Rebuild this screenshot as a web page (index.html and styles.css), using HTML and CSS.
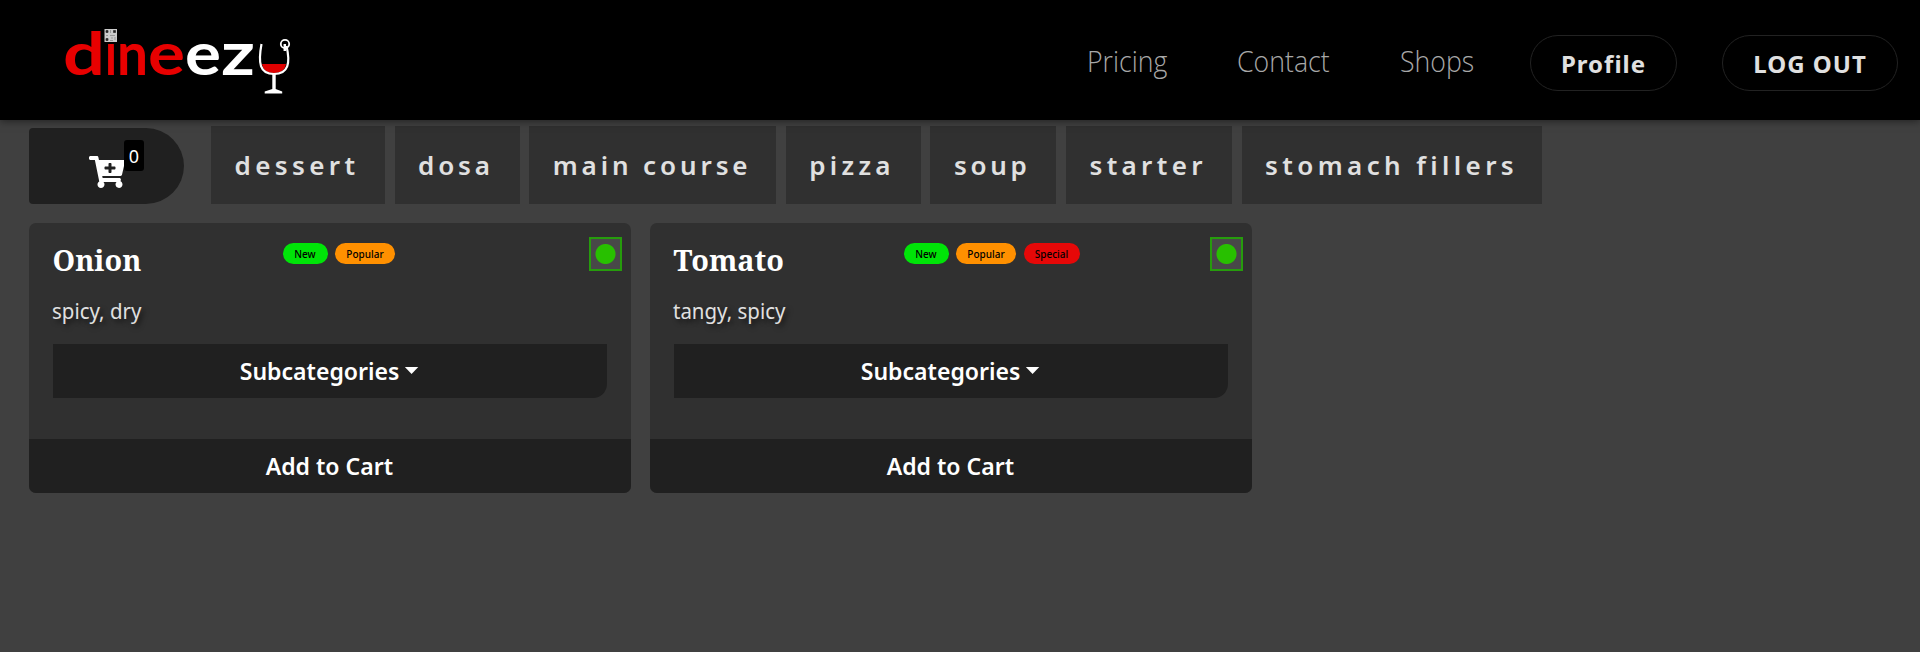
FILE: index.html
```html
<!DOCTYPE html>
<html lang="en">
<head>
<meta charset="utf-8">
<title>dineezy</title>
<link rel="stylesheet" href="styles.css">
</head>
<body>
<header class="header">
  <svg class="logo" viewBox="-10 -20 250 120" role="img" aria-label="dineezy">
    <g class="logo-text logo-red">
      <text x="-1" y="55" textLength="42" lengthAdjust="spacingAndGlyphs">d</text>
      <text x="41" y="55" textLength="12" lengthAdjust="spacingAndGlyphs">ı</text>
      <text x="53" y="55" textLength="31" lengthAdjust="spacingAndGlyphs">n</text>
      <text x="84" y="55" textLength="37" lengthAdjust="spacingAndGlyphs">e</text>
    </g>
    <g class="logo-text logo-white">
      <text x="121" y="55" textLength="36" lengthAdjust="spacingAndGlyphs">e</text>
      <text x="157" y="55" textLength="34" lengthAdjust="spacingAndGlyphs">z</text>
    </g>
    <rect x="40.500" y="9" width="12.500" height="13" fill="#ccc"/>
    <path d="M42 10.500h2v2h-2zM49.500 10.500h2v2h-2zM42 18.500h2v2h-2z" fill="#222" stroke="#333" stroke-width=".8"/>
    <path d="M46.500 10v3M46 15.500h5M42 15.500h2M47 18h2M51 17v3M46 20.500h3" fill="none" stroke="#999" stroke-width="1"/>
    <path d="M198 44h24c-1 6-5 9-12 9s-11-3-12-9z" fill="#e00000"/>
    <path d="M197.500 24c-3.500 19-2 30 12.500 30s16.500-11 12.500-28" fill="none" stroke="#fff" stroke-width="2.200"/>
    <path d="M220.800 31v-7" stroke="#fff" stroke-width="2.500"/>
    <circle cx="221" cy="24" r="4.200" fill="none" stroke="#fff" stroke-width="1.800"/>
    <path d="M208.300 54h3.400v15l6.500 2.500v2h-17.500v-2l7.600-2.500z" fill="#fff"/>
  </svg>
  <nav class="nav">
    <a class="nav-link pricing"><span>Pricing</span></a>
    <a class="nav-link contact"><span>Contact</span></a>
    <a class="nav-link shops"><span>Shops</span></a>
    <a class="pill profile">Profile</a>
    <a class="pill logout">LOG OUT</a>
  </nav>
</header>
<main>
  <div class="toolbar">
    <button class="cart" aria-label="Cart">
      <svg class="cart-icon" viewBox="0 0 576 512"><path fill="#fff" d="M504.717 320H211.572l6.545 32h268.418c15.401 0 26.816 14.301 23.403 29.319l-5.517 24.276C523.112 414.668 536 433.828 536 456c0 31.202-25.519 56.444-56.824 55.994-29.823-.429-54.35-24.631-55.155-54.447-.44-16.287 6.085-31.049 16.803-41.548H231.176C241.553 426.165 248 440.326 248 456c0 31.813-26.528 57.431-58.67 55.938-28.54-1.325-51.751-24.385-53.251-52.917-1.158-22.034 10.436-41.455 28.051-51.586L93.883 64H24C10.745 64 0 53.255 0 40V24C0 10.745 10.745 0 24 0h102.529c11.401 0 21.228 8.021 23.513 19.19L159.208 64H551.99c15.401 0 26.816 14.301 23.403 29.319l-47.273 208C525.637 312.246 515.923 320 504.717 320zM408 168h-48v-40c0-8.837-7.163-16-16-16h-16c-8.837 0-16 7.163-16 16v40h-48c-8.837 0-16 7.163-16 16v16c0 8.837 7.163 16 16 16h48v40c0 8.837 7.163 16 16 16h16c8.837 0 16-7.163 16-16v-40h48c8.837 0 16-7.163 16-16v-16c0-8.837-7.163-16-16-16z"/></svg>
      <span class="cart-count">0</span>
    </button>
    <div class="tabs">
      <a class="tab dessert">dessert</a>
      <a class="tab dosa">dosa</a>
      <a class="tab main-course">main course</a>
      <a class="tab pizza">pizza</a>
      <a class="tab soup">soup</a>
      <a class="tab starter">starter</a>
      <a class="tab stomach">stomach fillers</a>
    </div>
  </div>
  <section class="cards">
    <article class="card">
      <div class="card-head">
        <h2 class="title">Onion</h2>
        <div class="badges"><span class="badge new">New</span><span class="badge popular">Popular</span></div>
        <span class="veg"></span>
      </div>
      <p class="desc"><span>spicy, dry</span></p>
      <button class="sub"><span class="label">Subcategories<i class="caret"></i></span></button>
      <button class="add"><span class="label">Add to Cart</span></button>
    </article>
    <article class="card">
      <div class="card-head">
        <h2 class="title">Tomato</h2>
        <div class="badges"><span class="badge new">New</span><span class="badge popular">Popular</span><span class="badge special">Special</span></div>
        <span class="veg"></span>
      </div>
      <p class="desc"><span>tangy, spicy</span></p>
      <button class="sub"><span class="label">Subcategories<i class="caret"></i></span></button>
      <button class="add"><span class="label">Add to Cart</span></button>
    </article>
  </section>
</main>
</body>
</html>
```
FILE: styles.css
```css
* { box-sizing: border-box; }
body {
  margin: 0;
  height: 652px;
  overflow: hidden;
  background: #404040;
  font-family: "Noto Sans", sans-serif;
}
button { border: 0; padding: 0; color: inherit; font: inherit; }
.header {
  position: relative;
  display: flex;
  justify-content: space-between;
  height: 120px;
  padding: 0 22px 0 54px;
  background: #000;
  box-shadow: 0 1px 8px rgba(0, 0, 0, .5);
}
.logo { width: 250px; height: 120px; }
.logo-text { font: 700 60px Lato, sans-serif; }
.logo-red { fill: #e80000; }
.logo-white { fill: #fff; }
.nav { display: flex; align-items: flex-start; padding-top: 20px; }
.nav-link {
  font: 300 30px/40px "Open Sans", sans-serif;
  color: #a8a8a8;
  margin-top: 21px;
  padding-left: 1px;
  white-space: nowrap;
}
.nav-link span { display: inline-block; transform: scaleX(.89); transform-origin: 0 50%; }
.pricing { width: 150px; }
.contact { width: 163px; }
.shops { width: 131px; }
.pill {
  height: 56px;
  margin-top: 15px;
  border: 1px solid #222;
  border-radius: 28px;
  font: 700 24px/56px "Noto Sans", sans-serif;
  letter-spacing: 1px;
  color: #e0e0e0;
  text-align: center;
}
.profile { width: 147px; margin-right: 45px; }
.logout { width: 176px; }
.toolbar { display: flex; align-items: flex-end; height: 84px; padding-left: 29px; }
.cart {
  position: relative;
  width: 155px;
  height: 76px;
  margin-right: 27px;
  border-radius: 4px 38px 38px 4px;
  background: #202020;
}
.cart-icon { position: absolute; left: 59.500px; top: 27.500px; width: 36px; height: 32px; }
.cart-count {
  position: absolute;
  left: 95px;
  top: 12px;
  width: 20px;
  height: 31px;
  border-radius: 3px;
  background: #000;
  color: #fff;
  font: 18px/33px "Noto Sans", sans-serif;
  text-align: center;
}
.tabs { display: flex; gap: 9.600px; }
.tab {
  height: 78px;
  padding-left: 23.500px;
  background: #303030;
  color: #e0e0e0;
  font: 600 26px/78px "Noto Sans", sans-serif;
  letter-spacing: 4px;
  white-space: nowrap;
}
.dessert { width: 174px; letter-spacing: 4.400px; }
.dosa { width: 125px; letter-spacing: 3.800px; }
.main-course { width: 247px; letter-spacing: 3.900px; }
.pizza { width: 135px; letter-spacing: 4.300px; }
.soup { width: 126px; letter-spacing: 3.700px; }
.starter { width: 166px; letter-spacing: 4.350px; }
.stomach { width: 300px; letter-spacing: 4.400px; }
.cards { display: flex; gap: 19px; padding: 19px 29px; }
.card {
  display: flex;
  flex-direction: column;
  width: 602px;
  height: 270px;
  border-radius: 7px;
  background: #303030;
  overflow: hidden;
}
.card-head { display: flex; height: 68px; padding: 14px 9px 0 23.500px; }
.title {
  width: 230px;
  margin: 0;
  color: #fff;
  font: 700 28.800px/46px "Noto Serif", "DejaVu Serif Condensed", serif;
}
.badges { display: flex; gap: 7.500px; flex: 1; padding-top: 6px; }
.badge {
  height: 21px;
  border-radius: 11px;
  color: #000;
  font: 500 10px/23px "Noto Sans", sans-serif;
  text-align: center;
}
.new { width: 45px; background: #00e408; }
.popular { width: 60px; background: #ff9000; }
.special { width: 56px; background: #e60808; }
.veg {
  width: 33px;
  height: 34px;
  border: 2px solid #269c0c;
  background: radial-gradient(circle, #28c000 9.500px, #484848 10.500px);
}
.desc {
  margin: 0 23px;
  height: 53px;
  color: #e0e0e0;
  font: 22px/39px "Noto Sans", sans-serif;
  text-shadow: 3px 3px 5px rgba(0, 0, 0, .6);
}
.desc span { display: inline-block; transform: scaleX(.93); transform-origin: 0 50%; }
.sub {
  width: 554px;
  height: 54px;
  margin: 0 24px 41px;
  border-radius: 0 0 14px 0;
  background: #202020;
  color: #fff;
  font: 600 24px/54px "Noto Sans", sans-serif;
}
.label { display: inline-block; transform: translateX(-1px) scaleX(.96); }
.caret {
  display: inline-block;
  margin-left: 6px;
  vertical-align: 6px;
  border: 7px solid transparent;
  border-top-color: #fff;
  border-bottom: 0;
}
.add { height: 54px; background: #202020; color: #fff; font: 600 24px/54px "Noto Sans", sans-serif; }
```
